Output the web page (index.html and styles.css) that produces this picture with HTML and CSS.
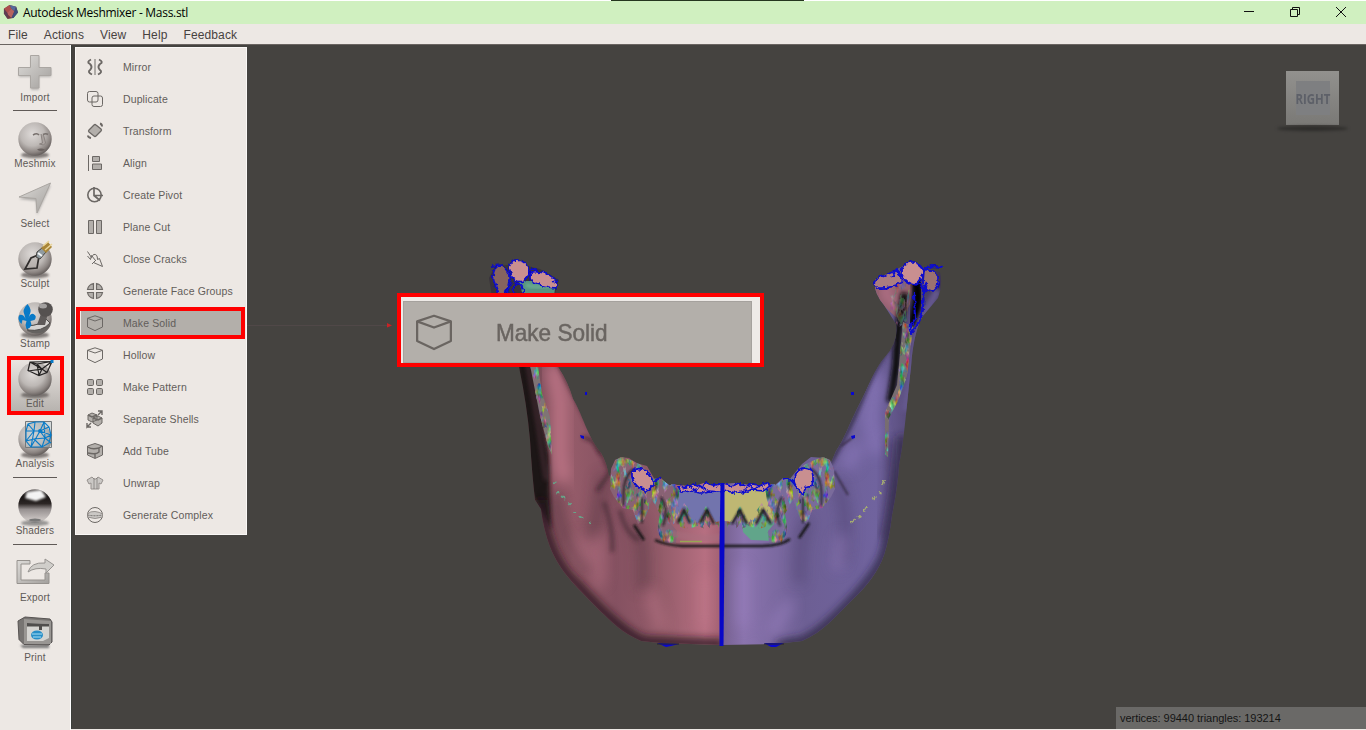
FILE: index.html
```html
<!DOCTYPE html>
<html lang="en">
<head>
<meta charset="utf-8">
<title>Autodesk Meshmixer - Mass.stl</title>
<link rel="stylesheet" href="styles.css">
</head>
<body>
<svg class="defs" width="0" height="0">
  <defs>
    <radialGradient id="ball" cx=".42" cy=".35" r=".65"><stop offset="0" stop-color="#dedad8"/><stop offset=".55" stop-color="#bdb8b5"/><stop offset=".85" stop-color="#8c8582"/><stop offset="1" stop-color="#686260"/></radialGradient>
    <linearGradient id="metal" x1="0" y1="0" x2="1" y2="1"><stop offset="0" stop-color="#dddbd8"/><stop offset="1" stop-color="#a3a09d"/></linearGradient>
    <linearGradient id="chrome" x1="0" y1="0" x2="0" y2="1"><stop offset="0" stop-color="#686362"/><stop offset=".2" stop-color="#171313"/><stop offset=".43" stop-color="#2c2625"/><stop offset=".6" stop-color="#969090"/><stop offset=".9" stop-color="#c9c3c1"/><stop offset="1" stop-color="#777"/></linearGradient>
    <filter id="soft1" x="-30%" y="-60%" width="160%" height="220%"><feGaussianBlur stdDeviation="1.3"/></filter>
    <g id="sphere"><ellipse cx="20" cy="35" rx="14" ry="3.3" fill="#55504e" opacity=".7" filter="url(#soft1)"/><circle cx="20" cy="19" r="16.7" fill="url(#ball)"/></g>
    <g id="cube" fill="none" stroke="currentColor" stroke-linejoin="round"><path d="M8 .8 15.500 3.300V12L8 15.600.5 12V3.300z"/><path d="M.5 3.300 8 6l7.500-2.700"/></g>
  </defs>
</svg>
<div class="window">
  <header class="titlebar">
    <svg class="logo" viewBox="0 0 16 16"><path d="M1 5 7 1l7 2 2 6-5 6-6 1-4-6z" fill="#713842"/><path d="m1 5 6-4 2 4-4 5z" fill="#ad4f4d"/><path d="m7 1 7 2-2 5-3-3z" fill="#546a9b"/><path d="m9 5 3 3-3 7-5-5z" fill="#b66360"/><path d="m12 8 2-5 2 6-5 6-2 0z" fill="#3e4f7c"/><path d="m1 5 4 5v6L1 10z" fill="#5e3e53"/></svg>
    <span class="title">Autodesk Meshmixer - Mass.stl</span>
    <div class="controls">
      <svg viewBox="0 0 12 12"><path d="M1 5.500h10"/></svg>
      <svg viewBox="0 0 12 12"><path d="M1.500 3.500h7v7h-7zM3.500 3.500v-2h7v7h-2"/></svg>
      <svg viewBox="0 0 12 12"><path d="m1 1 10 10M11 1 1 11"/></svg>
    </div>
  </header>
  <nav class="menubar"><span>File</span><span>Actions</span><span>View</span><span>Help</span><span>Feedback</span></nav>
  <main class="work">
    <aside class="toolbar">
      <div class="tool"><svg viewBox="0 2 40 40"><path d="M16 5h8v12h12v8H24v13h-8V25H4v-8h12z" fill="#777" opacity=".45" filter="url(#soft1)"/><path d="M15.500 3.500h8.500v12h12v8H24V36h-8.500V23.500H3.500v-8h12z" fill="url(#metal)" stroke="#aaa6a2"/></svg><span>Import</span></div>
      <hr class="first">
      <div class="tool"><svg viewBox="0 0 40 40"><use href="#sphere"/><path d="M18 15q4-2.500 6 0M28 14.500q3-1.500 5 0" fill="none" stroke="#77706d" stroke-width="1.600"/><path d="m26 14 1.500 9-3 1 4 1 2-2-2-8" fill="#aaa3a0" stroke="#8a8380"/><path d="M22 29.500q4-2 8 0-4 3-8 0" fill="#6a6361"/></svg><span>Meshmix</span></div>
      <div class="tool"><svg viewBox="0 0 40 40"><path d="m36 5-14 30-1-14-17-2z" fill="#777" opacity=".5" filter="url(#soft1)"/><path d="M35.500 3 22 33 21 18.500 4 17z" fill="url(#metal)" stroke="#aaa6a2"/></svg><span>Select</span></div>
      <div class="tool"><svg viewBox="0 0 40 40"><use href="#sphere"/><path d="m23 15-7 3-6 11 12-1 2-12" fill="#b2aba8" fill-opacity=".5" stroke="#302d2c" stroke-width="1.700"/><path d="m22 12 5-4 4 4-6 7-4-2z" fill="#909ba1" stroke="#454340"/><path d="m26 8 7-6 4 5-6 6z" fill="#a98536"/><path d="m28 6 6-5m-4 9 7-6" stroke="#ead59a" stroke-width="1.500"/><path d="m23 13 4 3" stroke="#f3f6f7" stroke-width="2"/></svg><span>Sculpt</span></div>
      <div class="tool"><svg viewBox="0 0 40 40"><use href="#sphere"/><path d="M12 31q14 7 23-5l-1-4-21 4z" fill="#656260"/><path d="M12 26q15-1 19-7l4 4q-8 9-22 7z" fill="#d5d3d1" stroke="#4f4c4a"/><path d="m22 25 5-14 6 2-3 12z" fill="#5e5a59"/><circle cx="30.500" cy="9.500" r="7.300" fill="#555150"/><ellipse cx="28" cy="6" rx="4" ry="2.500" fill="#a3a09f"/><path d="M12.500 4q5 6 2 11l-1 3q2-5 5-4 4 2 1 6l-4 1 1 4-2 3-3 1-1-4 1-4-4-1-1 4q-5-5-2-9 4-1 6 4l-1-4q-3-5 3-11" fill="#087ac8"/></svg><span>Stamp</span></div>
      <div class="tool active"><svg viewBox="0 0 40 40"><use href="#sphere"/><path d="m15 2 22-.5-5 11-8 3-11-5zM15 2l7 2 5 5-14 2M22 4l15-2.500-10 7.500-3 6.500M22 4l2 11M15 2l12 7 5 3.500" fill="none" stroke="#252323" stroke-width="1.200"/><path d="M35.500 0h3v3h-3z" fill="#087bc8"/></svg><span>Edit</span></div>
      <div class="tool"><svg viewBox="0 0 40 40"><use href="#sphere"/><path d="M10.500 1.500h26v26h-26z" fill="#b9c7cd" fill-opacity=".45" stroke="#74787a"/><path d="m11 11 2-7 7-2h9l5 5 2 8-2 8-7 4H16l-5-6zM13 4l6 7 6 0 9-4M20 2l-1 9-8 0m0 10 8-10-3 16 9-16 4-9 1 16 6 5M11 21l8-2 11-1M25 11l5 7-3 9-8-8m6-8 11 4-6 3" fill="none" stroke="#087bc8" stroke-width="1.100"/><circle cx="25" cy="11" r="1.900" fill="#087bc8"/></svg><span>Analysis</span></div>
      <hr>
      <div class="tool"><svg viewBox="0 0 40 40"><ellipse cx="20" cy="36" rx="14" ry="3" fill="#666" opacity=".65" filter="url(#soft1)"/><circle cx="20" cy="19" r="16.700" fill="url(#chrome)"/><path d="m12 5 14-2 5 7-10 4-11-3z" fill="#fff" opacity=".95" filter="url(#soft1)"/><ellipse cx="20" cy="33" rx="6" ry="1.500" fill="#777"/></svg><span>Shaders</span></div>
      <hr>
      <div class="tool"><svg viewBox="0 0 40 40"><path d="M15 6.500H2v23h32V19h-4v7H6V10h9z" fill="url(#metal)" stroke="#96928e"/><path d="M13 18q3-10 17-9V5l9 6-8 8v-4q-11-2-18 3z" fill="#d0ceca" stroke="#969390"/></svg><span>Export</span></div>
      <div class="tool"><svg viewBox="0 0 40 40"><path d="M5 31h29v3H8z" fill="#777" filter="url(#soft1)"/><path d="m3 7 7-4 25 2 2 3v20l-3 3-25-.5-5-5z" fill="#777472" stroke="#575352" stroke-linejoin="round"/><path d="m9 5 27 2v23H9z" fill="#999693"/><path d="m12 9 22 1v14l-6 3H12z" fill="#d5d4d1"/><path d="m12 9 22 1v2.500H12zm12 2h3v5h-3z" fill="#504e4d"/><ellipse cx="22" cy="21" rx="6" ry="4.500" fill="#278ec7"/><path d="M17 20h10m-9 3h8" stroke="#a9dff5"/></svg><span>Print</span></div>
    </aside>
    <section class="viewport">
      <svg class="scene" viewBox="71 45 1295 684" preserveAspectRatio="none">
        <defs>
          <filter id="mottle" x="0" y="0" width="100%" height="100%" color-interpolation-filters="sRGB"><feTurbulence type="fractalNoise" baseFrequency=".19 .09" numOctaves="3" seed="8"/><feColorMatrix values="1.2 0 0 0 -.14  0 1 0 0 -.01  0 0 1.200 0 -.12  0 0 0 9 -3.900"/></filter>
          <filter id="rough" x="-5%" y="-5%" width="110%" height="110%"><feTurbulence type="fractalNoise" baseFrequency=".24" numOctaves="2" seed="3"/><feDisplacementMap in="SourceGraphic" scale="5" xChannelSelector="R" yChannelSelector="G"/></filter>
          <filter id="b2" x="-50%" y="-50%" width="200%" height="200%"><feGaussianBlur stdDeviation="2"/></filter>
          <filter id="b4" x="-50%" y="-50%" width="200%" height="200%"><feGaussianBlur stdDeviation="4"/></filter>
          <filter id="b6" x="-80%" y="-50%" width="260%" height="200%"><feGaussianBlur stdDeviation="7"/></filter>
          <linearGradient id="rose" x1="0" y1="0" x2="1" y2="0"><stop offset="0" stop-color="#4b3038"/><stop offset=".16" stop-color="#83505d"/><stop offset=".3" stop-color="#945b69"/><stop offset=".5" stop-color="#855161"/><stop offset=".72" stop-color="#945c6a"/><stop offset=".92" stop-color="#b66f81"/><stop offset="1" stop-color="#a16072"/></linearGradient>
          <linearGradient id="violet"><stop offset="0" stop-color="#75608f"/><stop offset=".1" stop-color="#8b74ae"/><stop offset=".38" stop-color="#6d5f94"/><stop offset=".7" stop-color="#70639e"/><stop offset=".85" stop-color="#574b7a"/><stop offset="1" stop-color="#3c3352"/></linearGradient>
          <clipPath id="leftBody"><path d="M515 340 519 367Q527 405 530 440 532 475 535 500L541 509Q543 528 550 547C560 573 580 590 600 611 612 622 622 633 641 641L660 643 722 645V484L713 486 704 483 694 486 678 485 668 485 661 478 655 480 647 466 636 463 629 458 620 457 615 463 609 477Q607 463 601 453C588 438 581 411 573 399Q568 382 558 367L545 335z"/></clipPath>
          <clipPath id="rightBody"><path d="M722 645 775 644 802 641C823 632 835 617 852 600Q876 578 884 555 889 540 892 515 898 485 899 465C905 435 907 400 911 367Q913 335 922 317L938 298Q943 285 940 272L921 267 903 266 875 280Q873 292 884 305L896 324Q899 342 885 357C875 368 868 388 860 403 850 422 845 438 836 451L830 465 824 458 811 457 802 464 789 480 783 478 775 485 766 487 751 485 735 483 722 484z"/></clipPath>
          <clipPath id="molars"><path d="M611 469 615 460 622 457 633 461 643 466 653 479 660 478 669 485 680 487 678 500 672 512 671 524 677 531 676 543 663 543 657 530 660 514 652 500 644 520 638 524 633 510 623 508 614 497 610 489z"/></clipPath>
          <clipPath id="rootEdge"><path d="M671 484h8l-1 20 2 12 4-13 6 8 8 10 8-15 4 8 6 8 5-1v6l-7 1-9 1-7-3-10 3-8-2-3 11-6-7z"/></clipPath>
          <clipPath id="leftStrip"><path d="m530 365 8 1 4 27 8 24 2 38-4-9-8-30z"/></clipPath>
          <clipPath id="rightStrip"><path d="m903 322 10 5-6 49-9 25-9 17-1 39-3-3v-42l12-27z"/></clipPath>
          <clipPath id="rightNeck"><path d="m876 283 29-7 5 8-3 37-9 7-3-9-15-18z"/></clipPath>
        </defs>
        <path d="m489 278 6-12 13-1 9-5 10 6 13 3 19 11-5 17h-62z" fill="#39333b"/>
        <path d="M519 281h37l-2 15h-31z" fill="#589480"/><path d="M526 285q12 4 27-1" stroke="#68a78e" stroke-width="4" fill="none" filter="url(#soft1)"/>
        <g clip-path="url(#leftBody)">
          <path d="M510 320h212v330H510z" fill="url(#rose)"/>
          <path d="m552 365 8 35 0 57 4 25" fill="none" stroke="#bd7586" stroke-width="15" filter="url(#b6)"/>
          <path d="m515 350 16 2 10 63 8 40 2 75-10-20-10-15z" fill="#1d1418" filter="url(#b2)"/>
          <path d="m527 360 11 65 8 55" fill="none" stroke="#5c3944" stroke-width="3" opacity=".7" filter="url(#b2)"/>
          <path d="m557 360 34 69 20 45" fill="none" stroke="#57313c" stroke-width="4" filter="url(#b2)"/>
          <path d="M603 475q-5 50-15 65M635 520q12 30 7 70M555 495q4 43 33 76" fill="none" stroke="#4c303b" stroke-width="10" opacity=".55" filter="url(#b6)"/>
          <path d="M599 535v50m-20-50 8 30M705 575v53M650 590l12 40" fill="none" stroke="#c27b8e" stroke-width="9" opacity=".6" filter="url(#b6)"/>
          <path d="M541 500q5 58 38 86 39 44 64 55l81 3" fill="none" stroke="#25171c" stroke-width="8" filter="url(#b4)"/>
          <path d="m583 437 10 4 8 13M597 491l7-10 6-9" fill="none" stroke="#39222a" stroke-width="2.500" filter="url(#b2)"/>
          <path d="M620 510q5 23 19 30m-35-38q10 28 8 50" fill="none" stroke="#452b34" stroke-width="4" opacity=".7" filter="url(#b2)"/>
        </g>
        <g clip-path="url(#rightBody)">
          <path d="M722 260h220v390H722z" fill="url(#violet)"/>
          <path d="M872 274h43l-5 30-9 18-30-28z" fill="#93606f"/>
          <path d="m889 280-4 14 11 12" stroke="#b06f85" stroke-width="8" fill="none" filter="url(#b4)"/>
          <path d="m905 293-7 39-2 35-6 35" stroke="#0d0b0e" stroke-width="8" fill="none" filter="url(#b2)"/>
          <path d="m916 278 2 20-5 28" stroke="#050506" stroke-width="10" fill="none" filter="url(#b2)"/>
          <path d="m938 290-18 33-6 34-9 54" stroke="#65588e" stroke-width="8" fill="none" filter="url(#b2)"/>
          <path d="m878 375-9 42 9 37m-20-10-12 24" stroke="#8876b8" stroke-width="14" fill="none" opacity=".8" filter="url(#b6)"/>
          <path d="M894 342c-15 16-28 46-34 61s-20 43-31 62" stroke="#332a45" stroke-width="4" fill="none" filter="url(#b2)"/>
          <path d="M890 440q4 52-8 98" stroke="#443961" stroke-width="8" opacity=".65" fill="none" filter="url(#b4)"/>
          <path d="M902 436q-8 86-18 119c-10 25-58 76-82 86l-25 4" stroke="#28213a" stroke-width="7" fill="none" filter="url(#b4)"/>
          <path d="M838 481q13 47 4 83M807 519q-11 30-8 65" stroke="#493c68" stroke-width="10" opacity=".55" fill="none" filter="url(#b6)"/>
          <path d="M742 565v61M790 602l-18 31M842 535l-5 35" stroke="#a086c6" stroke-width="9" opacity=".6" fill="none" filter="url(#b6)"/>
          <path d="m841 446 11-8M834 471l14 24" stroke="#3b304b" stroke-width="2" fill="none" filter="url(#soft1)"/>
        </g>
        <path d="M676 488 697 485 722 487v38l-7-3-8-14-9 15-9 1-7-16-7 12-5-15z" fill="#7274ad"/>
        <path d="M724 488 748 485 769 488l8 23-3 13-10-15-9 16-6 2-9-18-8 13-8-1z" fill="#beb773"/>
        <path d="m742 522 14 5 6-11 16 5 3 10-6 10-24-1-8-8z" fill="#61a58a"/>
        <g clip-path="url(#molars)"><path d="M600 450h85v100h-85z" fill="#886274"/><path d="M600 450h85v100h-85z" filter="url(#mottle)"/></g>
        <g transform="translate(1445 0) scale(-1 1)" clip-path="url(#molars)"><path d="M600 450h85v100h-85z" fill="#7a6b9b"/><path d="M600 450h85v100h-85z" filter="url(#mottle)"/></g>
        <g clip-path="url(#rootEdge)"><path d="M662 480h62v62h-62z" filter="url(#mottle)"/></g>
        <g transform="translate(1446 0) scale(-1 1)" clip-path="url(#rootEdge)"><path d="M662 480h62v62h-62z" filter="url(#mottle)"/></g>
        <g clip-path="url(#leftStrip)"><path d="M525 360h30v100h-30z" fill="#7f7475"/><path d="M525 360h30v100h-30z" filter="url(#mottle)"/></g>
        <g clip-path="url(#rightStrip)"><path d="M870 275h75v200h-75z" fill="#776d70"/><path d="M870 275h75v200h-75z" filter="url(#mottle)"/></g>
        <g clip-path="url(#rightNeck)" opacity=".45"><path d="M890 275h55v80h-55z" filter="url(#mottle)"/></g>
        <g fill="none" stroke="#171918" stroke-width="2.300" filter="url(#soft1)"><path d="m678 523 6-13 6 13m10 0 7-13 7 14m18 0 8-14 7 14m9 0 7-14 8 14"/><path d="M624 506q-3-29 10-37m27 28q8 13 2 29M821 506q3-29-10-37m-29 28q-8 13-2 29M642 498v25m161-25v25" stroke-width="1.700"/><path d="M655 540q10 5 27 6h80q19 0 28-7M634 525l10 15m165-17-10 15" stroke-width="2.500"/></g>
        <path d="M671 533q25 7 50 4" stroke="#a86f7f" stroke-width="7" opacity=".45" fill="none" filter="url(#soft1)"/>
        <path d="M680 541.500h22" stroke="#98a653" stroke-width="1.500"/>
        <g fill="none" stroke-width="2" filter="url(#rough)"><path d="m554 482 5 12 11 10 7 11 14 8" stroke="#67a388" stroke-dasharray="2 8 2 4 5 6"/><path d="m884 480-5 14-11 11-6 10-14 9" stroke="#a6ad70" stroke-dasharray="6 6 3 4 5 8"/></g>
        <g fill="#c98f90" stroke="#0908cf" stroke-width="1.700" stroke-linejoin="round" filter="url(#rough)">
          <path d="M493 276q1-10 7-10 6 1 9 9 1 10-4 17l-5 4q-5-8-7-20z" fill="#86645f"/>
          <path d="M509 269q1-8 7-9 8 0 12 7 2 8-4 14-7 2-12-4z"/><path d="M530 279q0-9 8-7 10 0 18 9v7q-13-1-23-6z"/><path d="M514 296q-2-10 3-13 7 2 8 13M506 295l5-12-2-8m-18-9 12-1m26 10 3-7 8 5m12 9 7-2m-30-6-5 6" fill="none"/>
          <path d="M874 284q1-6 9-8l12-5q8 5 6 12-12 6-23 5z" fill="#aa7c80"/><path d="M902 269q4-8 12-7 9 3 9 11-2 9-8 12-9-1-13-9z"/><path d="M924 270q10-2 14 8 2 7-5 13-8 0-10-9z" fill="#9b716f"/>
          <path d="m892 277 4-7 6 7m21-8 9-3 10 1M919 283l6 8 2-9m-4 9q2 19-5 33l-7 9-1-6 5-8-1-26" fill="none" stroke-width="2.200"/>
          <path d="M632 472q6-6 14-1 8 8 7 15l-8 7q-2-8-7-6-7-6-6-15z"/><path d="M812 471q-7-6-14 0-6 7-3 14l9 10q0-9 6-8 5-5 2-16z"/><path d="m652 482 9-5m122 2 5-1q9 7 12 14" fill="none"/>
          <path d="M678 486q10 2 17-2l7 3 4-4 10 3 6-2 9 2 8-3 6 3 8-2 6 1 8-2 3 3-6 5-12-1-10 2-6 1-8-2-10 1-9-1-8 2-10-2-9 1z"/>
          <path d="m682 488 8-2 6 5 4-5 7 4m37 0 6-4 5 4 5-5 5 4" fill="none" stroke-width="1.100"/>
        </g>
        <path d="M720.500 483h4v59l-1 104h-4v-100z" fill="#0807c7"/>
        <g fill="#0907cf"><path d="M585 392h2v3h-2zM851 392h3v3h-3zM580 435l4 1v3l-3-1zM851 436l4-1v3l-3 1z"/><path d="m657 643 22 1-8 2-5 1zm107 0h20l-8 4h-5z"/></g>
        <path d="M657 644h22m85 0h20" stroke="#282328"/>
        <path d="M247 325.500h141" stroke="#504848"/><path d="m387 323 5 2.500-5 2z" fill="#ca2225"/>
      </svg>
      <div class="actions">
        <div class="action"><svg viewBox="0 0 16 16"><path d="M8 0v16" stroke-width="1.500" opacity=".65"/><path d="M4 .5Q-1 3 3 5q3 3 0 6-3 2 2 4.500M12 .5q5 2.500 1 4.500-3 3 0 6 3 2-2 4.500" stroke-width="1.900"/></svg>Mirror</div>
        <div class="action"><svg viewBox="0 0 16 16"><rect x=".5" y=".5" width="10.500" height="10.500" rx="2"/><rect x="5" y="5" width="10.500" height="10.500" rx="2"/></svg>Duplicate</div>
        <div class="action"><svg viewBox="0 0 16 16"><path class="fill" d="M7 2q1-1 2 0l5 4q1 1 0 2l-5 5q-1 1-2 0L2 9Q1 8 2 7z" stroke-width="1.300"/><path d="m13 .5q2 .5 2 3M1 12.500q0 2 3 2.500" stroke-width="2"/></svg>Transform</div>
        <div class="action"><svg viewBox="0 0 16 16"><path d="M1.500 0v16"/><path class="fill" d="M5.500 1.500h7v5h-7zm0 7.500h9v5.500h-9z"/></svg>Align</div>
        <div class="action"><svg viewBox="0 0 16 16"><circle cx="7.500" cy="8" r="6.700" stroke-width="1.600"/><path d="M7 0v8.500h9M7 8.500l6 5" stroke-width="1.700"/></svg>Create Pivot</div>
        <div class="action"><svg viewBox="0 0 16 16"><path class="fill" d="M1.500 1.500h5v13h-5zm8 0h5v13h-5z"/></svg>Plane Cut</div>
        <div class="action"><svg viewBox="0 0 16 16"><path d="m.5.500 4 6 2-3q4-1 4 5l2-1 3 8-9-4 2-2-4-5-1 4L.5 5M5 13l4-4"/></svg>Close Cracks</div>
        <div class="action"><svg viewBox="0 0 16 16"><path class="fill" d="M6.500.5v6h-6q1-5 6-6zm3 0v6h6q-1-5-6-6zM.5 9.500h6v6q-5-1-6-6zm9 0h6q-1 5-6 6z" stroke-width="1.200"/></svg>Generate Face Groups</div>
        <div class="action selected"><svg viewBox="0 0 16 16"><use href="#cube"/></svg>Make Solid</div>
        <div class="action"><svg viewBox="0 0 16 16"><use href="#cube"/></svg>Hollow</div>
        <div class="action"><svg viewBox="0 0 16 16"><g class="fill"><rect x=".5" y=".5" width="6" height="6" rx="1.200"/><rect x="9.500" y=".5" width="6" height="6" rx="1.200"/><rect x=".5" y="9.500" width="6" height="6" rx="1.200"/><rect x="9.500" y="9.500" width="6" height="6" rx="1.200"/></g></svg>Make Pattern</div>
        <div class="action"><svg viewBox="0 0 16 16"><path class="fill" d="m1 4 4-2 5 2v5l-5 2-4-2zm5 3 5-2 4 2v5l-4 3-5-3z"/><path d="m1 4 4 2 5-2M6 7l5 2 4-2M11 4l4-4m-4 0h4v4M4 12l-4 4v-4m0 4h4" stroke-width="1.400"/></svg>Separate Shells</div>
        <div class="action"><svg viewBox="0 0 16 16"><path class="fill" d="M8 .5 15.500 3v9L8 15.500.5 12V3z"/><path d="M1 4q4 3 11 1v4q-3 3-11 1M12 5l3-2M8 11v4" stroke-width="1.400"/></svg>Add Tube</div>
        <div class="action"><svg viewBox="0 0 16 16"><path class="fill light" d="M5 2 0 5l2 4 2-1v6h8V8l2 1 2-4-5-3-2 2H7z"/><path d="M7 3v11M10 3v11" opacity=".6"/></svg>Unwrap</div>
        <div class="action"><svg viewBox="0 0 16 16"><circle cx="8" cy="8" r="7.500"/><path class="fill light" d="M.5 7q3-3 7.500-2.500T15.500 7v3Q8 13 .5 10z"/><path d="M.5 8q7.500 1.500 15 0" stroke-dasharray="2 1"/></svg>Generate Complex</div>
      </div>
      <div class="callout"><div class="callout-row"><svg viewBox="0 0 16 16"><use href="#cube"/></svg><span>Make Solid</span></div></div>
      <div class="viewcube"><div class="face"><span>RIGHT</span></div></div>
      <div class="status">vertices: 99440 triangles: 193214</div>
    </section>
  </main>
</div>
</body>
</html>
```
FILE: styles.css
```css
* { box-sizing: border-box; }
body { margin: 0; overflow: hidden; font-family: "Liberation Sans", Arial, sans-serif; }
.defs { position: absolute; }
.window { width: 1366px; height: 730px; display: flex; flex-direction: column; background: #ede8e4; }
.titlebar { height: 24px; flex: none; display: flex; align-items: center; background: linear-gradient(90deg, transparent 611px, #25361f 611px, #25361f 804px, transparent 804px) top / 100% 1px no-repeat, linear-gradient(#fff 1px, #d0f0c0 1px); padding-left: 3px; }
.logo { width: 15px; height: 15px; margin-top: -1px; }
.title { margin-left: 5px; font: 12px "Open Sans", "Noto Sans", sans-serif; letter-spacing: -.29px; color: #000; white-space: nowrap; }
.controls { margin-left: auto; display: flex; gap: 34px; padding-right: 19px; margin-top: -1px; }
.controls svg { width: 12px; height: 12px; fill: none; stroke: #111; }
.menubar { height: 21px; flex: none; display: flex; gap: 16px; padding: 1px 8px 0; align-items: center; font-size: 12px; letter-spacing: .12px; color: #47423f; border-bottom: 1px solid #6a6461; }
.work { flex: 1; min-height: 0; display: flex; }
.toolbar { width: 71px; border-right: 1px solid #fff; display: flex; flex-direction: column; align-items: center; }
.tool { height: 60px; width: 57px; flex: none; display: flex; flex-direction: column; align-items: center; padding-top: 9px; }
.tool svg { width: 40px; height: 40px; flex: none; }
.tool span { font-size: 10px; line-height: 12px; letter-spacing: .2px; color: #5e5956; margin-top: -2px; white-space: nowrap; }
.tool.active { position: relative; }
.tool.active::before { content: ""; position: absolute; inset: 5px 0 -4px 0; border: 4px solid red; background: linear-gradient(#eae5e1, #b7b3af); }
.tool.active svg, .tool.active span { position: relative; }
.toolbar hr { width: 44px; height: 7px; flex: none; margin: 0; border: 0; border-bottom: 1px solid #5f5956; }
.toolbar hr.first { height: 6px; }
.viewport { flex: 1; position: relative; height: 684px; background: #454340; border-left: 1px solid #3c3f3b; }
.scene { position: absolute; left: -1px; top: 0; width: 1295px; height: 684px; display: block; }
.actions { position: absolute; left: 3px; top: 2px; width: 172px; height: 488px; padding: 3px 0 0; background: #ede8e4; border: 1px solid #faf8f6; }
.action { height: 32px; padding-left: 11px; display: flex; align-items: center; gap: 20px; font-size: 10.500px; letter-spacing: .12px; color: #625d5a; white-space: nowrap; }
.action svg { width: 16px; height: 16px; flex: none; fill: none; stroke: currentColor; stroke-width: 1; color: #6c6865; overflow: visible; }
.action .fill { fill: #b3afab; stroke: #6c6865; }
.action .light { fill: #cbc8c5; stroke: #96918e; }
.action.selected { width: 169px; padding-left: 7px; border: 4px solid red; background: #b3afaa; box-shadow: inset 1px 0 #f0ece8; }
.callout { position: absolute; left: 325px; top: 248px; width: 367px; height: 74px; border: 4px solid red; background: #eeeae7; padding: 4px 8px 0 2px; }
.callout-row { width: 349px; height: 62px; background: #b3afaa; border: 1px solid #a5a19d; display: flex; align-items: center; padding-left: 12px; color: #6a6561; }
.callout-row svg { width: 36px; height: 36px; overflow: visible; filter: blur(.5px); }
.callout-row span { margin-left: 44px; font-size: 24px; transform-origin: left; transform: scaleX(.94); filter: blur(.7px); -webkit-text-stroke: .5px; margin-top: 2px; }
.viewcube { position: absolute; right: 27px; top: 26px; width: 53px; height: 54px; display: flex; align-items: center; justify-content: center; background: linear-gradient(#92918e, #7a7976); }
.viewcube::after { content: ""; position: absolute; left: -9px; right: -9px; bottom: -6px; height: 5px; border-radius: 50%; background: #2e2d2b; filter: blur(1.5px); }
.face { width: 34px; height: 34px; display: flex; align-items: center; justify-content: center; background: #7e7f81; }
.face span { font: bold 15px/34px "Open Sans", sans-serif; color: #5d6068; transform: scaleX(.76); }
.status { position: absolute; right: 0; bottom: 0; width: 250px; height: 22px; padding-left: 4px; line-height: 22px; font-size: 11px; letter-spacing: -.04px; color: #151515; background: #6a6967; white-space: nowrap; }
```
